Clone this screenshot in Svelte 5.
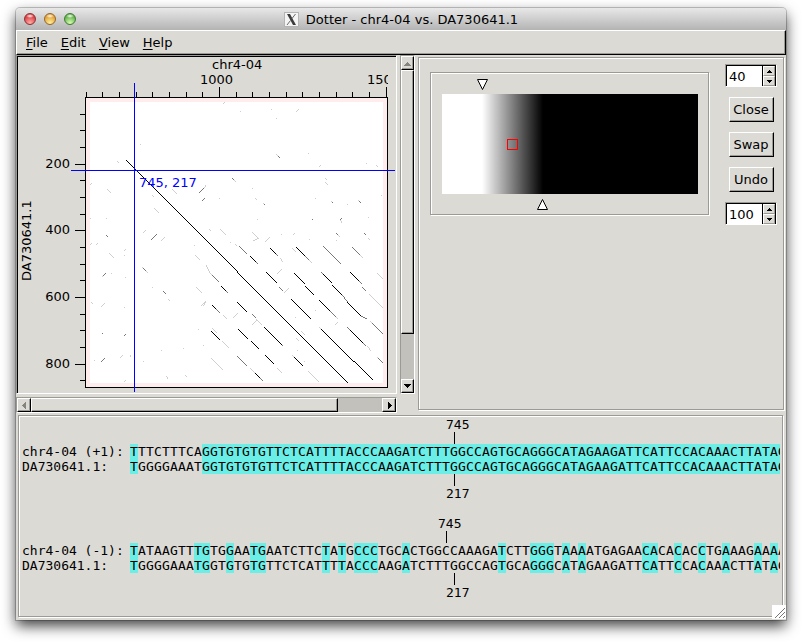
<script>
  const menus = ['File', 'Edit', 'View', 'Help'];

  let minValue = $state(40);
  let maxValue = $state(100);

  // Plot scale: three bases per pixel
  const plot = { x: 67, y: 40, w: 303, h: 291 };
  const xTicks = Array.from({ length: 19 }, (_, i) => 600 + i * 50);
  const yTicks = Array.from({ length: 17 }, (_, i) => 50 + i * 50);
  const px = (v) => 68 + Math.floor((v - 600) / 3);
  const py = (v) => 40 + Math.round(v / 3);

  // Match segments as x1 y1 x2 y2, grouped by strength
  const strong = [
    [126, 160, 347, 382], [250, 256, 255, 261], [270, 248, 275, 253], [296, 247, 304, 255],
    [266, 272, 276, 282], [294, 273, 304, 283], [305, 286, 313, 294], [323, 274, 331, 282],
    [332, 285, 341, 294], [350, 272, 358, 280], [221, 286, 225, 290], [212, 305, 215, 308],
    [237, 302, 246, 311], [264, 327, 281, 344], [291, 299, 310, 318], [319, 300, 329, 310],
    [347, 302, 360, 315], [321, 329, 334, 342], [335, 343, 372, 379], [350, 330, 362, 342],
    [211, 331, 219, 339], [238, 329, 247, 338], [251, 341, 258, 348], [265, 355, 273, 363],
    [294, 357, 302, 365], [255, 373, 259, 377]
  ];
  const medium = [
    [239, 246, 246, 253], [255, 261, 257, 263], [275, 253, 277, 255], [304, 255, 308, 259],
    [323, 246, 340, 263], [352, 247, 359, 254], [212, 275, 218, 281], [225, 290, 227, 292],
    [321, 272, 323, 274], [341, 294, 347, 301], [360, 315, 366, 318], [358, 280, 361, 283],
    [362, 287, 365, 290], [215, 308, 219, 312], [252, 314, 255, 317], [329, 310, 335, 316],
    [372, 323, 382, 333], [281, 344, 282, 345], [347, 327, 350, 330], [362, 342, 365, 345],
    [237, 356, 246, 365], [259, 377, 262, 380], [378, 358, 382, 362], [279, 287, 282, 290],
    [199, 192, 203, 188], [202, 200, 204, 198], [151, 239, 156, 234], [103, 275, 105, 273],
    [163, 291, 165, 293], [101, 361, 104, 358], [241, 248, 242, 249], [143, 268, 145, 270],
    [102, 333, 102, 333], [124, 335, 125, 334], [264, 204, 264, 204], [312, 219, 312, 219],
    [340, 219, 341, 218], [336, 233, 337, 234], [364, 233, 365, 234], [332, 202, 332, 202],
    [359, 201, 360, 202], [278, 156, 279, 157], [106, 235, 107, 236], [232, 178, 233, 179]
  ];
  const faint = [
    [308, 259, 311, 262], [359, 254, 362, 257], [210, 273, 212, 275], [280, 258, 282, 261],
    [284, 292, 288, 288], [369, 294, 382, 307], [377, 273, 382, 278], [223, 315, 226, 318],
    [256, 319, 261, 324], [335, 316, 337, 318], [319, 327, 321, 329], [367, 346, 370, 350],
    [370, 321, 372, 323], [377, 357, 378, 358], [212, 328, 216, 332], [222, 341, 228, 347],
    [211, 358, 222, 369], [246, 365, 246, 365], [250, 368, 255, 373], [277, 368, 281, 372],
    [292, 355, 294, 357], [308, 371, 318, 381], [335, 324, 337, 322], [292, 248, 295, 251],
    [235, 244, 236, 245], [206, 265, 209, 272], [203, 305, 205, 301], [223, 103, 224, 102],
    [240, 111, 240, 111], [271, 109, 271, 109], [296, 111, 298, 109], [276, 118, 276, 118],
    [276, 154, 279, 157], [308, 153, 308, 153], [319, 166, 320, 165], [366, 163, 366, 163],
    [376, 165, 377, 166], [232, 178, 235, 181], [252, 188, 252, 188], [325, 178, 326, 179],
    [325, 182, 327, 184], [255, 198, 256, 199], [263, 203, 264, 204], [219, 198, 219, 198],
    [315, 198, 315, 198], [331, 201, 332, 202], [358, 200, 360, 202], [347, 204, 347, 204],
    [381, 195, 381, 195], [257, 219, 257, 219], [340, 220, 341, 222], [368, 217, 368, 217],
    [220, 229, 225, 234], [209, 229, 210, 230], [252, 232, 257, 237], [253, 240, 258, 238],
    [265, 241, 269, 237], [281, 234, 281, 234], [293, 234, 294, 233], [309, 239, 309, 239],
    [336, 233, 339, 236], [364, 233, 365, 234], [368, 238, 369, 239], [336, 240, 336, 240],
    [230, 242, 230, 242], [140, 144, 140, 144], [117, 161, 118, 162], [90, 184, 91, 183],
    [107, 189, 110, 192], [204, 187, 205, 185], [172, 189, 176, 193], [152, 195, 153, 196],
    [154, 208, 158, 212], [90, 218, 90, 218], [106, 218, 106, 218], [143, 232, 145, 230],
    [161, 240, 164, 237], [90, 244, 91, 243], [96, 244, 97, 243], [194, 245, 194, 245],
    [109, 253, 113, 257], [124, 250, 125, 249], [124, 255, 124, 255], [142, 267, 147, 272],
    [102, 276, 105, 273], [111, 273, 111, 273], [125, 277, 125, 277], [152, 287, 152, 287],
    [168, 299, 169, 300], [101, 306, 104, 303], [91, 302, 92, 303], [124, 307, 124, 307],
    [195, 255, 199, 259], [196, 287, 201, 292], [201, 305, 205, 301], [198, 329, 198, 329],
    [120, 357, 122, 355], [130, 355, 130, 356], [94, 360, 94, 360], [143, 361, 143, 361],
    [161, 350, 161, 350], [183, 348, 183, 348], [166, 376, 167, 378], [185, 375, 186, 376],
    [124, 381, 125, 380], [203, 345, 203, 345], [233, 317, 237, 313], [252, 324, 256, 320],
    [277, 273, 281, 269], [296, 338, 298, 340], [301, 331, 304, 334], [304, 361, 304, 361],
    [315, 310, 315, 310], [295, 317, 295, 317], [297, 350, 297, 350]
  ];
  // One square per matching pixel, moved from window space into the canvas
  function toPath(list) {
    let d = '';
    for (const [x1, y1, x2, y2] of list) {
      const n = Math.max(Math.abs(x2 - x1), Math.abs(y2 - y1));
      for (let i = 0; i <= n; i++) {
        const f = n ? i / n : 0;
        d += `M${Math.round(x1 + (x2 - x1) * f) - 18} ${Math.round(y1 + (y2 - y1) * f) - 57}h1v1h-1z`;
      }
    }
    return d;
  }

  const query =
    'TGGGGAAATGGTGTGTGTTCTCATTTTACCCAAGATCTTTGGCCAGTGCAGGGCATAGAAGATTCATTCCACAAACTTATAG';
  const groups = [
    {
      strand: '+1',
      ref: 'TTTCTTTCAGGTGTGTGTTCTCATTTTACCCAAGATCTTTGGCCAGTGCAGGGCATAGAAGATTCATTCCACAAACTTATAG',
      refPos: 745, refIndex: 40, qPos: 217, qIndex: 40
    },
    {
      strand: '-1',
      ref: 'TATAAGTTTGTGGAATGAATCTTCTATGCCCTGCACTGGCCAAAGATCTTGGGTAAAATGAGAACACACACCTGAAAGAAAA',
      refPos: 745, refIndex: 39, qPos: 217, qIndex: 40
    }
  ];

  // Width of one base cell
  const CHAR = 8;
</script>

{#snippet arrow(dir)}
  <svg class="arrow" width="7" height="7" viewBox="0 0 7 7" shape-rendering="crispEdges" aria-hidden="true">
    {#if dir === 'up'}<path d="M3 2h1v1h1v1h1v1h1v1H0V5h1V4h1V3h1z" />
    {:else if dir === 'down'}<path d="M0 1h7v1H6v1H5v1H4v1H3V4H2V3H1V2H0z" />
    {:else if dir === 'left'}<path d="M5 0v7H4V6H3V5H2V4H1V3h1V2h1V1h1V0z" />
    {:else}<path d="M2 0v7h1V6h1V5h1V4h1V3H5V2H4V1H3V0z" />{/if}
  </svg>
{/snippet}

{#snippet spinner(label, value, step)}
  <div class="spin">
    <input type="number" aria-label={label} {value} onchange={(e) => step(Number(e.currentTarget.value) - value)} />
    <div class="steps">
      <button aria-label="Increase {label}" onclick={() => step(1)}>
        <svg width="5" height="3" viewBox="0 0 5 3" shape-rendering="crispEdges"><path d="M2 0h1v1h1v1h1v1H0V2h1V1h1z" /></svg>
      </button>
      <button aria-label="Decrease {label}" onclick={() => step(-1)}>
        <svg width="5" height="3" viewBox="0 0 5 3" shape-rendering="crispEdges"><path d="M0 0h5v1H4v1H3v1H2V2H1V1H0z" /></svg>
      </button>
    </div>
  </div>
{/snippet}

<main class="window">
  <header class="titlebar">
    <div class="lights">
      <button class="light red" aria-label="Close window"></button>
      <button class="light amber" aria-label="Minimise window"></button>
      <button class="light green" aria-label="Zoom window"></button>
    </div>
    <h1>
      <svg width="15" height="15" viewBox="0 0 15 15" aria-hidden="true">
        <rect x=".5" y=".5" width="14" height="14" fill="#f4f4f4" stroke="#b4b4b4" />
        <path d="M3 2h3l6 11H9z" fill="#3c3c3c" />
        <path d="M11.5 2L8 6.5M6.5 8.500L3 13" stroke="#6a6a6a" fill="none" />
      </svg>
      <span>Dotter - chr4-04 vs. DA730641.1</span>
    </h1>
  </header>

  <nav class="menubar">
    {#each menus as m}
      <button><u>{m[0]}</u>{m.slice(1)}</button>
    {/each}
  </nav>

  <div class="upper">
    <section class="viewer">
      <div class="canvas">
        <svg width="378" height="336" viewBox="0 0 378 336" role="img" aria-label="Dot plot of chr4-04 against DA730641.1">
          <defs><clipPath id="scale"><rect x="0" y="0" width="370" height="40" /></clipPath></defs>
          <g shape-rendering="crispEdges">
            <rect x={plot.x} y={plot.y} width={plot.w} height={plot.h} fill="#000" />
            <rect x={plot.x + 1} y={plot.y + 1} width={plot.w - 2} height={plot.h - 2} fill="#ffecec" />
            <rect x={plot.x + 5} y={plot.y + 5} width={plot.w - 10} height={plot.h - 10} fill="#fff" />
            {#each xTicks as t}
              <rect x={px(t)} y={t % 500 ? 35 : 30} width="1" height={t % 500 ? 5 : 10} />
            {/each}
            {#each yTicks as t}
              <rect x={t % 200 ? 62 : 57} y={py(t)} width={t % 200 ? 5 : 10} height="1" />
            {/each}
            <path d={toPath(faint)} fill="#cfcfcf" />
            <path d={toPath(medium)} fill="#777" />
            <path d={toPath(strong)} fill="#000" />
          </g>
          <text x="194" y="12">chr4-04</text>
          <g clip-path="url(#scale)">
            <text x="182" y="27">1000</text>
            <text x="349" y="27">1500</text>
          </g>
          {#each [200, 400, 600, 800] as v}
            <text x="52" y={py(v) + 4} text-anchor="end">{v}</text>
          {/each}
          <text transform="translate(13 224) rotate(-90)">DA730641.1</text>
          <g fill="#00f" shape-rendering="crispEdges">
            <rect x="53" y="113" width="324" height="1" />
            <rect x="116" y="26" width="1" height="309" />
          </g>
          <text x="121" y="130" fill="#00f">745, 217</text>
        </svg>
      </div>
      <div class="vbar">
        <button aria-label="Scroll up" class="off">{@render arrow('up')}</button>
        <div class="thumb"></div>
        <button aria-label="Scroll down" class="end">{@render arrow('down')}</button>
      </div>
      <div class="hbar">
        <button aria-label="Scroll left" class="off">{@render arrow('left')}</button>
        <div class="thumb"></div>
        <button aria-label="Scroll right" class="end">{@render arrow('right')}</button>
      </div>
    </section>

    <section class="greyramp etched">
      <div class="ramp etched">
        <svg width="275" height="139" viewBox="0 0 275 139" role="img" aria-label="Greyramp">
          <defs>
            <linearGradient id="grey" gradientUnits="userSpaceOnUse" x1="50" y1="0" x2="111" y2="0">
              <stop offset="0" stop-color="#fff" />
              <stop offset="1" stop-color="#000" />
            </linearGradient>
          </defs>
          <rect x="10" y="20" width="256" height="100" fill="url(#grey)" />
          <path d="M45.5 5.500h10l-5 10z" class="handle" />
          <rect x="75.5" y="65.500" width="10" height="10" class="knob" />
          <path d="M105.5 135.500h10l-5-10z" class="handle" />
        </svg>
      </div>
      <div class="controls">
        {@render spinner('minimum', minValue, (d) => (minValue += d))}
        <button class="push">Close</button>
        <button class="push">Swap</button>
        <button class="push">Undo</button>
        {@render spinner('maximum', maxValue, (d) => (maxValue += d))}
      </div>
    </section>
  </div>

  <section class="alignment etched">
    {#each groups as g}
      <div class="group">
        <div class="mark" style="margin-left: {g.refIndex * CHAR}px"><span>{g.refPos}</span><i></i></div>
        {#each [['chr4-04 (' + g.strand + '):', g.ref, query], ['DA730641.1:', query, g.ref]] as [name, seq, other]}
          <div class="line">
            <span class="name">{name}</span>
            <span class="seq">{#each seq as base, i}<b class:hit={base === other[i]}>{base}</b>{/each}</span>
          </div>
        {/each}
        <div class="mark" style="margin-left: {g.qIndex * CHAR}px"><i></i><span>{g.qPos}</span></div>
      </div>
    {/each}
  </section>
  <svg class="grip" width="14" height="14" viewBox="0 0 14 14" aria-hidden="true">
    <rect width="14" height="14" fill="#fff" />
    <path d="M3 13L13 3M7 13l6-6M11 13l2-2" stroke="#777" />
  </svg>
</main>

<style>
  :global(body) {
    margin: 0;
    background: #fff;
  }
  :global(#app) {
    display: flow-root;
  }
  .window {
    position: relative;
    margin: 8px 16px 23px;
    padding-bottom: 3px;
    min-width: 680px;
    background: #dcdad5;
    border-radius: 4px 4px 0 0;
    box-shadow: 0 0 0 1px rgba(0, 0, 0, 0.2), 0 6px 14px rgba(0, 0, 0, 0.75);
    font: 13px/15px 'DejaVu Sans', sans-serif;
    color: #000;
  }
  button {
    font: inherit;
    color: inherit;
    padding: 0;
    margin: 0;
    border: 0;
    background: none;
    box-sizing: border-box;
  }
  svg {
    display: block;
  }

  .titlebar {
    position: relative;
    height: 22px;
    display: flex;
    align-items: center;
    justify-content: center;
    border-radius: 4px 4px 0 0;
    background: linear-gradient(#e8e8e8, #b4b4b4);
  }
  .lights {
    position: absolute;
    left: 8px;
    top: 5px;
    display: flex;
    gap: 8px;
  }
  .light {
    width: 12px;
    height: 12px;
    border-radius: 50%;
    border: 1px solid;
  }
  .red {
    border-color: #8c3034;
    background: radial-gradient(ellipse 4px 2px at 50% 20%, #fff, transparent), radial-gradient(circle at 50% 90%, #ffb0a8, #dc3b42 70%);
  }
  .amber {
    border-color: #94662a;
    background: radial-gradient(ellipse 4px 2px at 50% 20%, #fff, transparent), radial-gradient(circle at 50% 90%, #fff09a, #e2a035 70%);
  }
  .green {
    border-color: #3e7a34;
    background: radial-gradient(ellipse 4px 2px at 50% 20%, #fff, transparent), radial-gradient(circle at 50% 90%, #d8ffb0, #62b04c 70%);
  }
  h1 {
    display: flex;
    align-items: center;
    gap: 7px;
    margin: 0;
    font-size: 13px;
    font-weight: 400;
  }

  .menubar {
    display: flex;
    gap: 1px;
    height: 25px;
    box-sizing: border-box;
    padding: 0 3px;
    border: 1px solid;
    border-color: #fff #000 #000 #fff;
    box-shadow: inset -1px -1px #9c9a94;
  }
  .menubar button {
    padding: 0 6px;
  }
  u {
    text-underline-offset: 2px;
  }

  .upper {
    display: flex;
    gap: 3px;
    padding-right: 2px;
  }
  .viewer {
    display: grid;
    grid-template-columns: 381px 15px;
    grid-template-rows: 339px 16px;
    gap: 3px;
  }
  .canvas {
    border: 1px solid;
    border-color: #9c9a94 #fff #fff #9c9a94;
    box-shadow: inset 1px 1px #000;
    padding: 1px 0 0 1px;
    box-sizing: border-box;
    overflow: hidden;
  }
  .vbar,
  .hbar {
    display: flex;
    box-sizing: border-box;
    border: 1px solid;
    border-color: #9c9a94 #fff #fff #9c9a94;
    background: #c3c1bc;
  }
  .vbar {
    flex-direction: column;
  }
  .vbar button,
  .hbar button,
  .thumb,
  .push {
    background: #dcdad5;
    border: 1px solid;
    border-color: #fff #000 #000 #fff;
    box-shadow: inset -1px -1px #9c9a94;
    box-sizing: border-box;
  }
  .vbar button,
  .hbar button {
    flex: none;
    display: grid;
    place-items: center;
  }
  .vbar button {
    height: 14px;
  }
  .hbar button {
    width: 14px;
  }
  .vbar .thumb {
    height: 264px;
  }
  .hbar .thumb {
    width: 307px;
  }
  .vbar .end {
    margin-top: auto;
  }
  .hbar .end {
    margin-left: auto;
  }
  .off .arrow {
    fill: #85837e;
  }

  .etched {
    border: 1px solid #9c9a94;
    box-shadow: 1px 1px #fff, inset 1px 1px #fff;
    box-sizing: border-box;
  }
  .greyramp {
    flex: 1;
    display: flex;
    align-items: flex-start;
    gap: 16px;
    margin: 2px 0 3px;
    padding: 0 6px 0 11px;
  }
  .ramp {
    flex: 1;
    margin-top: 14px;
    padding: 1px;
  }
  .handle {
    fill: #fff;
    stroke: #000;
  }
  .knob {
    fill: none;
    stroke: #f00;
  }
  .controls {
    width: 52px;
    margin-top: 6px;
    display: flex;
    flex-direction: column;
    align-items: center;
    gap: 10px;
  }
  .push {
    width: 45px;
    height: 25px;
  }
  .spin {
    display: flex;
    width: 52px;
    height: 23px;
    box-sizing: border-box;
    border: 1px solid;
    border-color: #9c9a94 #fff #fff #9c9a94;
    background: #fff;
  }
  .spin input {
    flex: 1;
    min-width: 0;
    box-sizing: border-box;
    margin: 0;
    padding: 0 0 0 2px;
    border: solid #000;
    border-width: 1px 1px 0 1px;
    border-radius: 0;
    background: #fff;
    font: inherit;
    appearance: textfield;
    outline: none;
  }
  .spin input::-webkit-inner-spin-button {
    appearance: none;
    margin: 0;
  }
  .steps {
    width: 12px;
    display: grid;
    border: solid #000;
    border-width: 1px 1px 0 0;
    background: #dcdad5;
  }
  .steps button {
    display: grid;
    place-items: center;
    border: 1px solid;
    border-color: #fff #9c9a94 #9c9a94 #fff;
  }

  .alignment {
    margin: 2px 3px 0 2px;
    height: 202px;
    padding: 1px 2px 0 3px;
    font-family: 'DejaVu Sans Mono', monospace;
    overflow: hidden;
  }
  .group {
    margin-bottom: 15px;
  }
  .line {
    display: flex;
    white-space: pre;
  }
  .name {
    flex: none;
    width: 108px;
  }
  .seq {
    flex: 1;
    min-width: 0;
    height: 15px;
    overflow: hidden;
  }
  .seq b {
    display: inline-block;
    width: 8px;
    height: 15px;
    vertical-align: top;
    font-weight: 400;
  }
  .hit {
    background: #6beee6;
  }
  .mark {
    padding-left: 104px;
  }
  .mark span {
    display: block;
  }
  .mark i {
    display: block;
    width: 1px;
    height: 12px;
    margin-left: 8px;
    background: #000;
  }
  .grip {
    position: absolute;
    right: 0;
    bottom: 1px;
  }
</style>
